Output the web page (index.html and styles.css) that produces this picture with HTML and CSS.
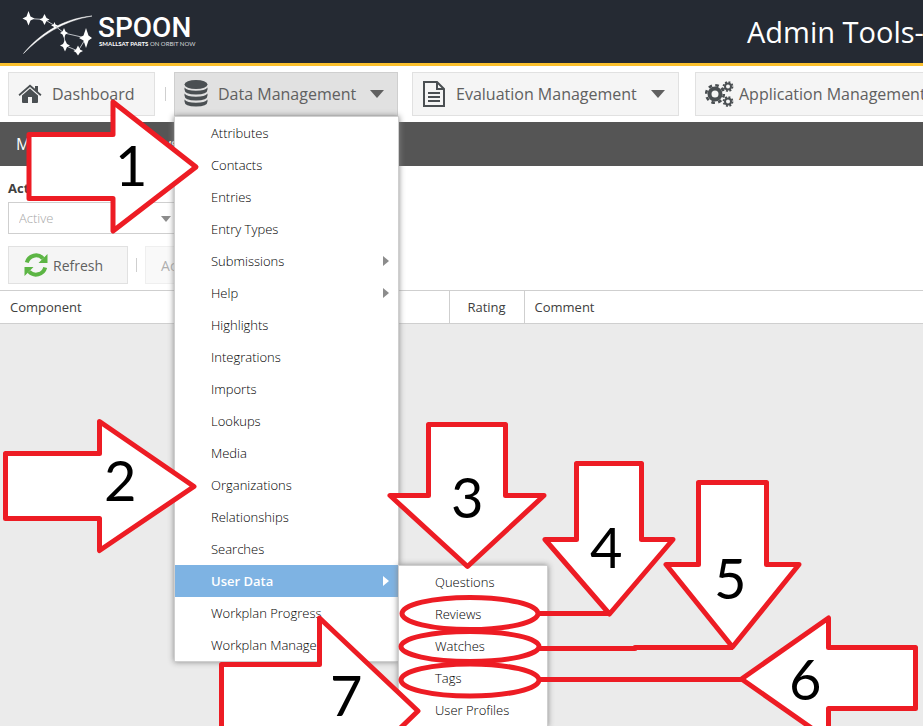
FILE: index.html
```html
<!DOCTYPE html>
<html lang="en">
<head>
<meta charset="utf-8">
<title>SPOON Admin Tools</title>
<link rel="stylesheet" href="styles.css">
</head>
<body>
<header class="topbar">
  <svg class="logo" width="180" height="48" viewBox="20 6 180 48" role="img" aria-label="SPOON">
    <path d="M23.500 51.500C38 34 60 17 92 14C62 19 41 34 23.500 51.500Z" fill="#fff" stroke="#fff" stroke-width="0.500"/>
    <path d="M28.500 16.500L44.500 17.500L54.500 23.500L64 31L86 36L78 49L65 43.500L64 31" fill="none" stroke="#b9bcc2" stroke-width="1"/>
    <g fill="#fff">
      <path d="M28.500 9L30.500 14.500L34.500 16.500L30.500 18.500L28.500 23.500L26.500 18.500L22.500 16.500L26.500 14.500Z"/>
      <path d="M44.500 12L46.500 16L49.500 17.500L46.500 19L44.500 23L42.500 19L39.500 17.500L42.500 16Z"/>
      <path d="M54.500 20L55.500 22.500L58 23.500L55.500 24.500L54.500 27L53.500 24.500L51 23.500L53.500 22.500Z"/>
      <path d="M64 26L65.500 29.500L68 31L65.500 32.500L64 36L62.500 32.500L60 31L62.500 29.500Z"/>
      <path d="M86 26L88.500 33.500L92 36L88.500 38.500L86 46L83.500 38.500L79 36L83.500 33.500Z"/>
      <path d="M65 38L67 42L70 43.500L67 45L65 49.500L63 45L60 43.500L63 42Z"/>
      <path d="M78 43.500L80 47.500L83 49L80 50.500L78 53.500L76 50.500L73.500 49L76 47.500Z"/>
    </g>
    <text x="98" y="35" class="logo-name">SPOON</text>
    <text x="99" y="44" class="logo-tag"><tspan class="logo-bold">SMALLSAT PARTS</tspan> ON ORBIT NOW</text>
  </svg>
  <h1 class="page-title">Admin Tools-</h1>
</header>

<nav class="toolbar" aria-label="Admin tools">
  <button class="tool dash" type="button">
    <svg width="24" height="20" viewBox="0 0 24 20"><path d="M12 4.500L20 11.500V18Q20 19 19 19H14V13H10V19H5Q4 19 4 18V11.500Z"/><path d="M12 0.500L17 4.700V2H20V7.400L23.500 10.500L22.300 12L12 3L1.700 12L.5 10.500Z"/></svg>
    Dashboard
  </button>
  <span class="sep"></span>
  <div class="menu-anchor">
    <button class="tool active" type="button" aria-expanded="true">
      <svg width="24" height="28" viewBox="0 0 24 28"><ellipse cx="12" cy="4.500" rx="11.500" ry="4.500"/><path d="M.5 7.500Q3 10.700 12 10.700T23.500 7.500V9.500Q23.500 14.500 12 14.500T.5 9.500ZM.5 13.500Q3 16.700 12 16.700T23.500 13.500V15.500Q23.500 20.500 12 20.500T.5 15.500ZM.5 19.500Q3 22.700 12 22.700T23.500 19.500V21.500Q23.500 26.500 12 26.500T.5 21.500Z"/></svg>
      Data Management
      <i class="caret"></i>
    </button>
    <ul class="menu">
      <li><a href="#">Attributes</a></li>
      <li><a href="#">Contacts</a></li>
      <li><a href="#">Entries</a></li>
      <li><a href="#">Entry Types</a></li>
      <li><a href="#" class="more">Submissions</a></li>
      <li><a href="#" class="more">Help</a></li>
      <li><a href="#">Highlights</a></li>
      <li><a href="#">Integrations</a></li>
      <li><a href="#">Imports</a></li>
      <li><a href="#">Lookups</a></li>
      <li><a href="#">Media</a></li>
      <li><a href="#">Organizations</a></li>
      <li><a href="#">Relationships</a></li>
      <li><a href="#">Searches</a></li>
      <li class="open"><a href="#" class="more selected">User Data</a>
        <ul class="menu submenu">
          <li><a href="#">Questions</a></li>
          <li><a href="#">Reviews</a></li>
          <li><a href="#">Watches</a></li>
          <li><a href="#">Tags</a></li>
          <li><a href="#">User Profiles</a></li>
        </ul>
      </li>
      <li><a href="#">Workplan Progress</a></li>
      <li><a href="#">Workplan Manage</a></li>
    </ul>
  </div>
  <button class="tool evaluation" type="button">
    <svg width="24" height="28" viewBox="0 0 24 28"><path d="M2 2H15L22 9V26H2Z M15 2V9H22 M6 13H18 M6 17H18 M6 21H18" fill="none" stroke="#4a4f52" stroke-width="2"/></svg>
    Evaluation Management
    <i class="caret"></i>
  </button>
  <button class="tool application" type="button">
    <svg width="30" height="26" viewBox="0 0 30 26"><g fill="none" stroke="#4a4f52"><circle cx="10" cy="13" r="5.500" stroke-width="4"/><circle cx="10" cy="13" r="8.800" stroke-width="2.600" stroke-dasharray="3.600 3.310"/><circle cx="23" cy="5.500" r="3" stroke-width="2"/><circle cx="23" cy="5.500" r="4.500" stroke-width="1.800" stroke-dasharray="1.900 1.630"/><circle cx="23" cy="20.500" r="3" stroke-width="2"/><circle cx="23" cy="20.500" r="4.500" stroke-width="1.800" stroke-dasharray="1.900 1.630"/></g></svg>
    Application Management
  </button>
</nav>

<main>
  <h2 class="panel-title">Manage User Reviews</h2>
  <section class="filters">
    <label for="status">Active Status:</label>
    <div class="select-wrap">
      <select id="status"><option>Active</option></select>
      <i class="caret small"></i>
    </div>
  </section>
  <div class="actions">
    <button class="action" type="button">
      <svg width="24" height="24" viewBox="0 0 24 24"><g fill="none" stroke="#5cb544" stroke-width="4"><path d="M2.800 9.500A9.500 9.500 0 0 1 19 5.500"/><path d="M21.200 14.500A9.500 9.500 0 0 1 5 18.500"/></g><path d="M23.500 1V10H14.500ZM.5 23V14H9.500Z" fill="#5cb544"/></svg>
      Refresh
    </button>
    <span class="sep short"></span>
    <button class="action" type="button" disabled>Activate</button>
  </div>
  <table class="grid">
    <thead><tr><th class="component">Component</th><th class="rating">Rating</th><th>Comment</th></tr></thead>
  </table>
</main>

<svg class="notes" width="923" height="726" viewBox="0 0 923 726">
  <g class="ink">
    <path d="M29 134.500H113V102L196 167L113 231V198.500H29Z"/>
    <path d="M5.500 453.500H99.500V421.500L194 486.500L99.500 550.500V518.500H5.500Z"/>
    <path d="M428.500 424.500H505.500V495.500H544L467.500 566.500L390 495.500H428.500Z"/>
    <path d="M576.500 463.500H641.500V539.500H673L609.500 614L545 539.500H576.500Z"/>
    <path d="M698.500 482.500H766.500V564.500H799L732.500 647L666 564.500H698.500Z"/>
    <path d="M741.500 679L828.500 618V647.500H915.500V708.500H828.500V740Z"/>
    <path d="M221.500 740V664.500H319.500V618L418 711L388 740"/>
    <path class="line" d="M538 613.500H609M539 648.500H635V647.500H733M539 679.500H742"/>
    <ellipse class="line" cx="470" cy="613.500" rx="68" ry="16"/>
    <ellipse class="line" cx="470" cy="646.500" rx="69" ry="15"/>
    <ellipse class="line" cx="470" cy="680" rx="69" ry="16"/>
  </g>
  <g class="digits">
    <text x="115" y="186">1</text>
    <text x="104" y="501">2</text>
    <text x="451" y="518">3</text>
    <text x="590" y="568">4</text>
    <text x="714" y="599">5</text>
    <text x="789" y="700">6</text>
    <text x="330" y="716">7</text>
  </g>
</svg>
</body>
</html>
```
FILE: styles.css
```css
* { box-sizing: border-box; }

body {
  margin: 0;
  min-height: 100vh;
  overflow: hidden;
  position: relative;
  background: #ebebeb;
  color: #404040;
  font-family: "Open Sans", "Noto Sans", sans-serif;
  font-size: 13px;
}

button, select { font-family: inherit; }

.topbar {
  display: flex;
  align-items: center;
  justify-content: space-between;
  height: 66px;
  padding-left: 20px;
  border-bottom: 3px solid #fbc02d;
  background: #252a33;
  overflow: hidden;
}

.logo { flex: none; }
.logo-name { font-family: Roboto, sans-serif; font-size: 28px; font-weight: 500; fill: #fff; }
.logo-tag { font-family: Lato, sans-serif; font-size: 6px; fill: #d5d7da; }
.logo-bold { font-weight: 700; fill: #fff; }

.page-title {
  flex: none;
  width: 176px;
  margin: 0;
  color: #fff;
  font-size: 29px;
  font-weight: 400;
  line-height: 40px;
  white-space: nowrap;
}

.toolbar {
  display: flex;
  height: 56px;
  padding: 6px 8px;
  background: #fff;
}

.tool {
  display: flex;
  flex: none;
  align-items: center;
  gap: 10px;
  height: 44px;
  padding: 0 9px;
  border: 1px solid #e1e1e1;
  background: #f5f5f5;
  color: #606060;
  font-size: 16px;
  white-space: nowrap;
}
.tool svg { fill: #4a4f52; }
.tool.dash { width: 147px; }
.tool.active { width: 224px; background: #e1e1e1; border-color: #cfcfcf; }
.tool.evaluation { width: 267px; margin-left: 14px; }
.tool.application { margin-left: 16px; gap: 4px; }

.sep {
  flex: none;
  align-self: center;
  width: 1px;
  height: 14px;
  margin: 0 8px 0 10px;
  background: #cfcfcf;
}
.sep.short { margin: 0 8px; }

.caret {
  margin-left: 4px;
  border: 7px solid transparent;
  border-top: 8px solid #606060;
  border-bottom: 0;
}

.menu-anchor { position: relative; }
.menu {
  position: absolute;
  z-index: 2;
  top: 44px;
  left: 0;
  width: 225px;
  margin: 0;
  padding: 0;
  border: 1px solid #cfcfcf;
  background: #fff;
  box-shadow: 0 0 6px #888;
  list-style: none;
}
.menu li { position: relative; }
.menu a {
  display: block;
  height: 32px;
  padding-left: 36px;
  color: #000;
  font-size: 13px;
  font-weight: 300;
  line-height: 32px;
  text-decoration: none;
}
.menu .more::after {
  content: "";
  position: absolute;
  top: 11px;
  right: 9px;
  border: 5px solid transparent;
  border-left: 6px solid #8c8c8c;
  border-right: 0;
}
.menu .selected { background: #7eb3e3; color: #fff; font-weight: 600; }
.menu .selected::after { border-left-color: #fff; }
.submenu { top: 0; left: 223px; width: 150px; }

.panel-title {
  margin: 0;
  padding: 0 16px;
  background: #555;
  color: #fefefe;
  font-size: 16px;
  font-weight: 400;
  line-height: 44px;
}

.filters { padding: 12px 8px; background: #fff; }
.filters label { display: block; height: 24px; font-weight: 700; line-height: 20px; }
.select-wrap { position: relative; width: 171px; }
.select-wrap select {
  appearance: none;
  width: 100%;
  height: 32px;
  padding: 0 10px;
  border: 1px solid #cfcfcf;
  border-radius: 0;
  background: #fff;
  color: #a8a8a8;
  font-size: 13px;
  font-weight: 300;
}
.caret.small {
  position: absolute;
  top: 14px;
  right: 8px;
  border-width: 6px 5px 0;
  border-top-color: #8c8c8c;
}

.actions { display: flex; padding: 0 8px 6px; background: #fff; }
.action {
  display: flex;
  align-items: center;
  gap: 5px;
  height: 38px;
  padding: 0 24px 0 15px;
  border: 1px solid #e1e1e1;
  background: #f5f5f5;
  color: #606060;
  font-size: 14px;
}
.action:disabled { opacity: 0.5; }

.grid {
  width: 100%;
  border-collapse: collapse;
  table-layout: fixed;
  background: #fff;
}
.grid th {
  height: 33px;
  padding: 0 10px;
  border: 1px solid #cfcfcf;
  border-width: 1px 1px 1px 0;
  font-size: 13px;
  font-weight: 400;
  text-align: left;
}
.grid th:last-child { border-right: 0; }
.grid .component { width: 449px; }
.grid .rating { width: 75px; text-align: center; }

.notes { position: absolute; z-index: 5; top: 0; left: 0; pointer-events: none; }
.ink { fill: #fff; stroke: #ed1c24; stroke-width: 5px; stroke-linejoin: round; }
.line { fill: none; }
.digits { font-family: Lato, sans-serif; font-size: 56px; fill: #000; }
```
